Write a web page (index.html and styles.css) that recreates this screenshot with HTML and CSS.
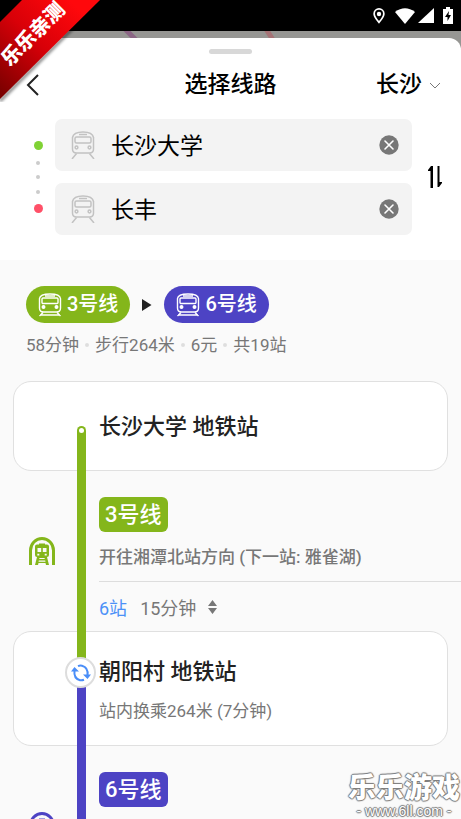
FILE: index.html
```html
<!DOCTYPE html>
<html lang="zh-CN">
<head>
<meta charset="utf-8">
<meta name="viewport" content="width=device-width, initial-scale=1">
<title>选择线路</title>
<link rel="stylesheet" href="styles.css">
</head>
<body>
<svg class="defs" aria-hidden="true">
  <symbol id="train" viewBox="0 0 24 28" fill="none" stroke="currentColor" stroke-width="1.5">
    <path d="M1.500 6.500Q2.500 1 12 1t10.500 5.500V18q0 4-4 4h-13q-4 0-4-4zM8 3.500h8"/>
    <rect x="4" y="6" width="16" height="6" rx="1.500"/>
    <circle cx="5.500" cy="16.500" r="1.400"/><circle cx="18.500" cy="16.500" r="1.400"/>
    <path d="M5.500 22.500L1 28M18.500 22.500L23 28"/>
  </symbol>
  <symbol id="pill-train" viewBox="0 0 24 24" fill="none" stroke="currentColor" stroke-width="1.400">
    <path d="M1.500 5.500Q2 1 12 1t10.500 4.500V15q0 4-4 4h-13q-4 0-4-4zM7 3h10"/>
    <rect x="4" y="5" width="16" height="5.500" rx="1"/>
    <circle cx="5.500" cy="14" r="1.300" fill="currentColor"/><circle cx="18.500" cy="14" r="1.300" fill="currentColor"/>
    <path d="M5 19.500L1.500 23M19 19.500L22.500 23M2 22h20"/>
  </symbol>
  <symbol id="clear" viewBox="0 0 20 20">
    <circle cx="10" cy="10" r="9.700" fill="#777"/>
    <path d="M6 6l8 8M14 6l-8 8" stroke="#fff" stroke-width="1.600" stroke-linecap="round"/>
  </symbol>
  <symbol id="tunnel" viewBox="0 0 26 28">
    <path d="M1.500 28V13.500a11.500 12 0 0 1 23 0V28" fill="none" stroke="currentColor" stroke-width="3"/>
    <path fill="currentColor" fill-rule="evenodd" d="M10 6.500h6v1h2q2 0 2 2V18q0 2-2 2l2 8h-3l-.5-2h-7L9 28H6l2-8q-2 0-2-2V9.500q0-2 2-2h2zM8.500 11v4h3.700v-4zM13.800 11v4h3.700v-4zM8.300 16.800v1.700h2v-1.700zM15.700 16.800v1.700h2v-1.700zM10.500 21l-.3 1h5.600l-.3-1zM9.800 23.500l-.3 1.200h7l-.3-1.200z"/>
  </symbol>
</svg>

<header class="status">
  <svg width="12" height="16" viewBox="0 0 12 16"><path fill="#fff" fill-rule="evenodd" d="M6 0a5.700 5.700 0 0 1 5.700 5.700C11.700 9 8.500 12.500 6 15.700 3.500 12.500.3 9 .3 5.700A5.700 5.700 0 0 1 6 0zm0 1.700a4 4 0 0 0-4 4C2 8 4 10.500 6 13c2-2.500 4-5 4-7.300a4 4 0 0 0-4-4z"/><circle cx="6" cy="6" r="2.200" fill="#fff"/></svg>
  <svg class="wifi" width="20" height="16" viewBox="0 0 20 16"><path fill="#fff" d="M0 4Q10-3.500 20 4L10 16z"/></svg>
  <svg class="cell" width="16" height="15" viewBox="0 0 16 15"><path fill="#fff" d="M16 0v15H0z"/></svg>
  <svg width="10" height="17" viewBox="0 0 10 17"><path fill="#fff" d="M3 0h4v2h3v15H0V2h3z"/><path d="M6 4L2 10h2.500v4L8 8H5.500z"/></svg>
</header>

<div class="map">
  <svg class="roads" viewBox="0 0 461 20" preserveAspectRatio="xMidYMin slice"><path d="M125-2l12 12" stroke="#8b6685" stroke-width="5"/><path d="M266-2l9 14" stroke="#a57376" stroke-width="5"/></svg>
  <main class="sheet">
    <div class="handle"></div>
    <div class="head">
      <button class="back" type="button" aria-label="返回"><svg width="14" height="24" viewBox="0 0 14 24"><path d="M12 2L2 12l10 10" fill="none" stroke="#222" stroke-width="2"/></svg></button>
      <h1>选择线路</h1>
      <button class="city" type="button">长沙<svg width="12" height="7" viewBox="0 0 12 7"><path d="M1 1l5 5 5-5" fill="none" stroke="#777" stroke-width="1"/></svg></button>
    </div>

    <form class="search">
      <div class="dots"><i class="end start"></i><i></i><i></i><i></i><i class="end finish"></i></div>
      <div class="fields">
        <div class="field">
          <label for="from" aria-label="起点"><svg width="24" height="28"><use href="#train"/></svg></label>
          <input id="from" type="text" value="长沙大学">
          <button type="button" aria-label="清除起点"><svg width="20" height="20"><use href="#clear"/></svg></button>
        </div>
        <div class="field">
          <label for="to" aria-label="终点"><svg width="24" height="28"><use href="#train"/></svg></label>
          <input id="to" type="text" value="长丰">
          <button type="button" aria-label="清除终点"><svg width="20" height="20"><use href="#clear"/></svg></button>
        </div>
      </div>
      <button class="swap" type="button" aria-label="交换起终点"><svg width="16" height="24" viewBox="0 0 16 24"><path d="M1 6V5l3-4h2v22H3.500V6zM10.500 1h2v16H15v1l-3 4h-1.500z"/></svg></button>
    </form>

    <section class="result">
      <div class="route">
        <span class="pill line3"><svg width="24" height="24"><use href="#pill-train"/></svg>3号线</span>
        <svg width="10" height="12" viewBox="0 0 10 12"><path d="M0 0l9.500 6L0 12z" fill="#222"/></svg>
        <span class="pill line6"><svg width="24" height="24"><use href="#pill-train"/></svg>6号线</span>
      </div>
      <p class="stats"><span>58分钟</span><i></i><span>步行264米</span><i></i><span>6元</span><i></i><span>共19站</span></p>

      <div class="steps">
        <article class="stop origin line3-track"><h2>长沙大学 地铁站</h2></article>
        <section class="leg line3-track">
          <svg class="tunnel" width="26" height="28"><use href="#tunnel"/></svg>
          <div class="info">
            <span class="badge line3">3号线</span>
            <p class="direction">开往湘潭北站方向 (下一站: 雅雀湖)</p>
            <button class="count" type="button"><b>6站</b>15分钟<svg width="9" height="14" viewBox="0 0 9 14"><path d="M4.500 0L9 6H0zM0 8h9l-4.500 6z" fill="#777"/></svg></button>
          </div>
        </section>
        <article class="stop transfer line6-track">
          <span class="change"><svg width="20" height="18" viewBox="0 0 20 18"><g fill="none" stroke="#4a8ef8" stroke-width="2"><path d="M3.500 6.500Q2.500 14.500 9 16.200q2 .4 4-.4"/><path d="M7 2.200q2-.9 4-.4Q17.500 3.500 16.500 11.500"/></g><path fill="#4a8ef8" d="M0 7.500L3.500 3 8 7.500zM12 10.500h8L16.500 15z"/></svg></span>
          <h2>朝阳村 地铁站</h2>
          <p>站内换乘264米 (7分钟)</p>
        </article>
        <section class="leg line6-track">
          <svg class="tunnel" width="26" height="28"><use href="#tunnel"/></svg>
          <div class="info"><span class="badge line6">6号线</span></div>
        </section>
      </div>
    </section>
  </main>
</div>

<div class="ribbon"><svg width="102" height="102" viewBox="0 0 102 102">
  <defs><linearGradient id="red" gradientUnits="userSpaceOnUse" x1="0" y1="95" x2="80" y2="10"><stop stop-color="#780000"/><stop offset=".55" stop-color="#d80008"/><stop offset="1" stop-color="#ff080c"/></linearGradient><filter id="soft"><feGaussianBlur stdDeviation="1.500"/></filter></defs>
  <path d="M0 101L102-1" stroke="#000" stroke-opacity=".5" stroke-width="3" filter="url(#soft)"/>
  <path d="M22 0h78L0 99V22z" fill="url(#red)"/>
  <text x="33" y="41" transform="rotate(-45 33 34)" text-anchor="middle">乐乐亲测</text>
</svg></div>
<div class="watermark"><strong>乐乐游戏</strong><span>- www.6ll.com -</span></div>
</body>
</html>
```
FILE: styles.css
```css
* { box-sizing: border-box; }
body {
  margin: 0;
  height: 100vh;
  position: relative;
  overflow: hidden;
  display: flex;
  flex-direction: column;
  background: #fafafa;
  color: #222;
  font-family: Roboto, "Noto Sans CJK SC", sans-serif;
}
h1, h2, p { margin: 0; font-weight: 500; }
button { margin: 0; padding: 0; border: 0; background: none; color: inherit; font: inherit; }
svg { display: block; flex: none; }
.defs { position: absolute; width: 0; height: 0; }

.status {
  flex: none;
  height: 31px;
  padding: 0 8px;
  display: flex;
  align-items: center;
  justify-content: flex-end;
  background: #000;
}
.wifi { margin-left: 10px; }
.cell { margin: 0 9px 0 3px; }

.map { flex: 1; position: relative; padding-top: 7px; background: #969693; }
.roads { position: absolute; top: 0; left: 0; width: 100%; height: 20px; }
.sheet {
  position: relative;
  min-height: 100%;
  padding-top: 11px;
  border-radius: 12px 12px 0 0;
  background: #fff;
}
.handle { width: 43px; height: 5px; margin: 0 auto; border-radius: 3px; background: #d8d8d8; }

.head {
  display: grid;
  grid-template-columns: 1fr auto 1fr;
  align-items: center;
  height: 62px;
  padding: 0 20px;
  color: #000;
}
.head h1 { font-size: 23px; line-height: 32px; }
.city { justify-self: end; display: flex; align-items: center; gap: 7px; font-size: 23px; font-weight: 500; line-height: 32px; }
.back { justify-self: start; padding-left: 6px; }

.search { display: flex; align-items: center; padding: 3px 18px 25px 32px; }
.dots { display: flex; flex-direction: column; align-items: center; justify-content: space-between; width: 12px; height: 72px; }
.dots i { width: 4px; height: 4px; border-radius: 50%; background: #ccc; }
.dots .end { width: 9px; height: 9px; }
.dots .start { background: #80d235; }
.dots .finish { background: #ff5068; }
.fields { flex: 1; min-width: 0; margin: 0 15px 0 11px; display: grid; grid-template-columns: minmax(0, 1fr); gap: 12px; }
.field { display: flex; align-items: center; height: 52px; padding: 0 13px 0 16px; border-radius: 7px; background: #f3f3f3; }
.field label { color: #c2c2c2; }
.field input { flex: 1; min-width: 0; height: 34px; margin: 0 12px 0 16px; padding: 0 0 2px; border: 0; outline: 0; background: none; color: #000; font: 23px Roboto, "Noto Sans CJK SC", sans-serif; }

.result { padding-top: 26px; background: #fafafa; }
.route { display: flex; align-items: center; gap: 12px; padding-left: 26px; }
.pill { display: flex; align-items: center; gap: 5px; height: 37px; padding: 0 12px; border-radius: 19px; color: #fff; font-size: 20px; font-weight: 500; line-height: 37px; }
.line3 { background: #84b61b; }
.line6 { background: #4d43c4; }
.stats { display: flex; align-items: center; padding: 10px 0 0 26px; color: #777; font-size: 17px; font-weight: 400; line-height: 24px; }
.stats i { width: 4px; height: 4px; margin: 0 6px; border-radius: 50%; background: #dedede; }

.steps { margin-top: 24px; }
.line3-track { --line: #84b61b; }
.line6-track { --line: #4d43c4; }
.stop, .leg { position: relative; }
.stop { margin: 0 13px; padding: 29px 16px 27px 85px; border: 1px solid #e0e0e0; border-radius: 18px; background: #fff; }
.stop h2 { font-size: 22px; line-height: 32px; }
.stop::before, .leg::before { content: ""; position: absolute; top: 0; bottom: 0; left: 77px; width: 9px; background: var(--line); }
.stop::before { top: 40px; bottom: -1px; left: 63px; }
.origin::before { top: 44px; border-radius: 5px 5px 0 0; }
.origin::after { content: ""; position: absolute; top: 46px; left: 65px; width: 5px; height: 5px; border-radius: 50%; background: #fff; }
.transfer { padding-top: 24px; padding-bottom: 21px; }
.transfer::after { content: ""; position: absolute; top: -1px; left: 63px; width: 9px; height: 41px; background: #84b61b; }
.transfer p { margin-top: 10px; color: #777; font-size: 17px; font-weight: 400; line-height: 26px; }
.change { position: absolute; z-index: 1; top: 25px; left: 51px; width: 31px; height: 31px; display: grid; place-items: center; border: 2px solid #ddd; border-radius: 50%; background: #fff; }

.leg { display: grid; grid-template-columns: 99px 1fr; }
.tunnel { margin: 66px 0 0 29px; color: var(--line); }
.info { padding-top: 26px; }
.badge { display: inline-block; padding: 0 6px; border-radius: 6px; color: #fff; font-size: 22px; font-weight: 500; line-height: 35px; vertical-align: top; }
.direction { padding: 12px 0 11px; border-bottom: 1px solid #ddd; color: #777; font-size: 17px; line-height: 26px; }
.count { display: flex; align-items: center; height: 49px; color: #777; font-size: 18px; }
.count b { margin-right: 13px; color: #4c91f7; font-weight: 400; }
.count svg { margin-left: 12px; }

.ribbon { position: absolute; top: 0; left: 0; }
.ribbon text { fill: #fff; font: 900 20px "Noto Sans CJK SC", sans-serif; }
.watermark { position: absolute; right: 1px; bottom: 0; display: grid; justify-items: center; color: #fff; text-shadow: 1px 0 1px #777, -1px 0 1px #777, 0 1px 1px #777, 0 -1px 1px #777; }
.watermark strong { font: 900 28px/34px "Noto Sans CJK SC", sans-serif; }
.watermark span { font: 14px/16px "Liberation Sans", sans-serif; }
```
